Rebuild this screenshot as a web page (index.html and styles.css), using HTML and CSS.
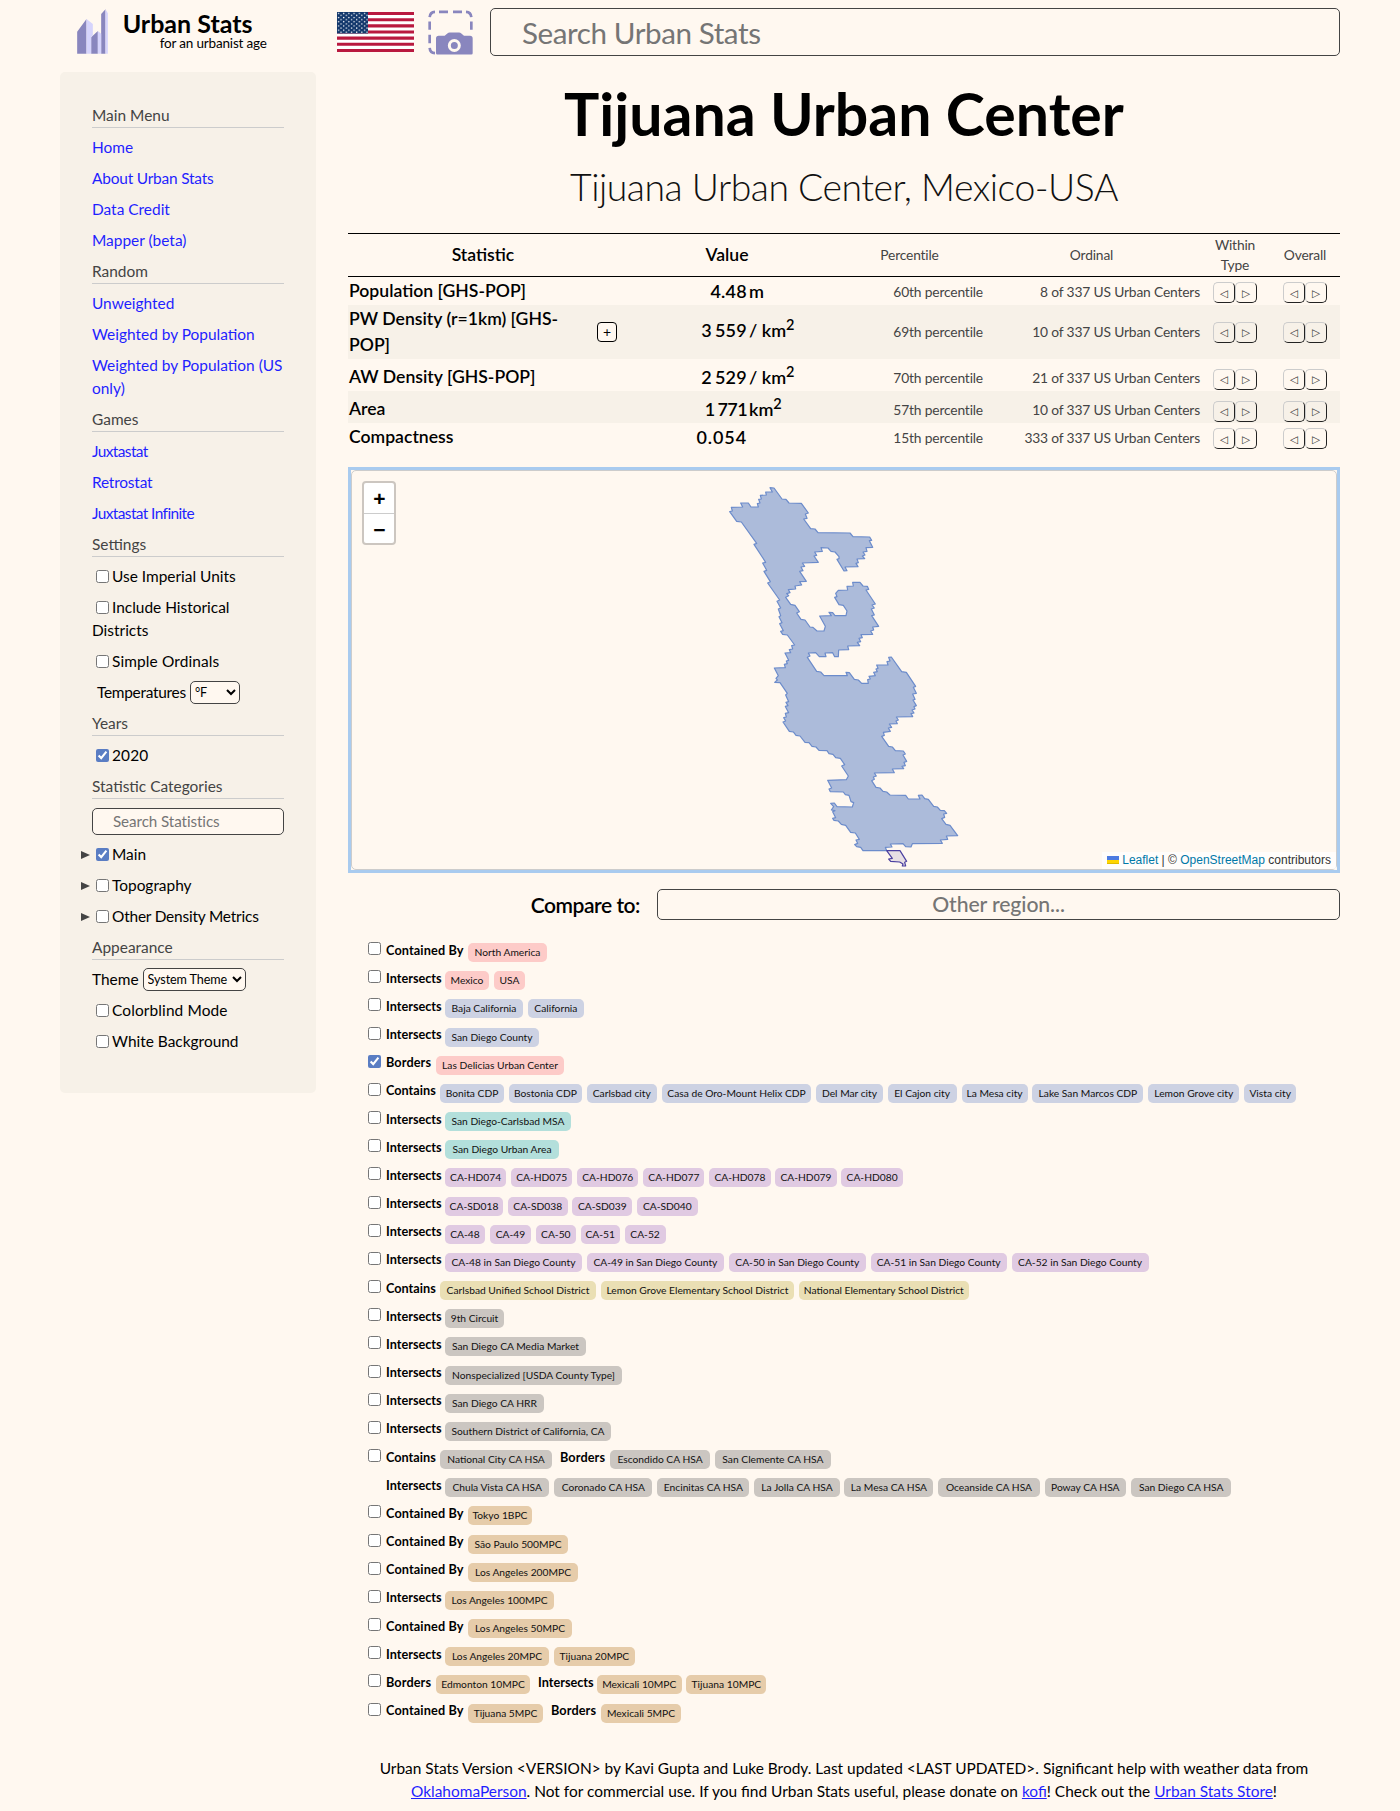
FILE: index.html
```html
<!DOCTYPE html>
<html lang="en">
<head>
<meta charset="utf-8">
<title>Tijuana Urban Center</title>
<link rel="stylesheet" href="styles.css">
</head>
<body>
<header class="top">
  <a class="brand">
    <svg class="logo" viewBox="80 27 92 135"><g fill="#8986be"><path d="M80 95 108 57V161H80zM122 112 142 93V161H122zM152 42 165 28V161H152z"/></g><g fill="#d6d4fc"><path d="M108 57 127 72V106L122 112V161H108zM142 93 152 101V161H142zM165 28 172 40V161H165z"/></g></svg>
    <span class="brand-text"><b>Urban Stats</b><span>for an urbanist age</span></span>
  </a>
  <svg class="flag" viewBox="0 0 77 40">
    <defs><pattern id="stars" width="5.2" height="4.2" patternUnits="userSpaceOnUse"><circle cx="1.5" cy="1.3" r=".72" fill="#fff"/><circle cx="4.1" cy="3.4" r=".72" fill="#fff"/></pattern></defs>
    <rect width="77" height="40" fill="#fff"/>
    <path d="M0 1.54H77M0 7.69H77M0 13.85H77M0 20H77M0 26.15H77M0 32.3H77M0 38.46H77" stroke="#b9193f" stroke-width="3.08"/>
    <rect width="31" height="21.5" fill="#12376b"/><rect width="31" height="21.5" fill="url(#stars)"/>
  </svg>
  <svg class="camera" viewBox="1133 29 135 134">
    <path d="M1138 50Q1139 35 1154 34M1166 34H1193M1208 34H1235M1247 34Q1262 35 1263 50M1138 63V88M1138 103V128M1263 63V88M1138 142Q1139 157 1154 158" fill="none" stroke="#8986be" stroke-width="8"/>
    <path d="M1157 114q0-8 8-8h18l8-7q3-3 7-3h28q4 0 7 3l8 7h18q8 0 8 8v44q0 4-4 4h-102q-4 0-4-4z" fill="#8986be"/>
    <circle cx="1212" cy="135" r="15" fill="#8986be" stroke="#fff8f0" stroke-width="9"/>
  </svg>
  <input class="search" placeholder="Search Urban Stats">
</header>
<div class="page">
  <nav class="side">
    <h4>Main Menu</h4>
    <a>Home</a><a class="snug">About Urban Stats</a><a>Data Credit</a><a>Mapper (beta)</a>
    <h4>Random</h4>
    <a>Unweighted</a><a>Weighted by Population</a><a>Weighted by Population (US<br>only)</a>
    <h4>Games</h4>
    <a class="tight">Juxtastat</a><a class="snug">Retrostat</a><a class="tight">Juxtastat Infinite</a>
    <h4>Settings</h4>
    <label><input type="checkbox">Use Imperial Units</label>
    <label><input type="checkbox">Include Historical<br>Districts</label>
    <label class="loose"><input type="checkbox">Simple Ordinals</label>
    <div class="pick indent snug">Temperatures <select class="temp"><option>°F</option></select></div>
    <h4>Years</h4>
    <label class="loose"><input type="checkbox" checked>2020</label>
    <h4>Statistic Categories</h4>
    <input class="stat-search" placeholder="Search Statistics">
    <label class="tree"><i></i><input type="checkbox" checked>Main</label>
    <label class="tree"><i></i><input type="checkbox">Topography</label>
    <label class="tree snug"><i></i><input type="checkbox">Other Density Metrics</label>
    <h4>Appearance</h4>
    <div class="pick">Theme <select class="theme"><option>System Theme</option></select></div>
    <label class="loose"><input type="checkbox">Colorblind Mode</label>
    <label><input type="checkbox">White Background</label>
  </nav>
  <main class="main">
    <h1>Tijuana Urban Center</h1>
    <h2>Tijuana Urban Center, Mexico-USA</h2>
    <section class="stats">
      <div class="row head"><b>Statistic</b><b class="value-head">Value</b><span>Percentile</span><span>Ordinal</span><span>Within<br>Type</span><span>Overall</span></div>
      <div class="row r1"><b>Population [GHS-POP]</b><b class="num">4.48</b><b class="unit">m</b><span>60th percentile</span><span>8 of 337 US Urban Centers</span><span class="nav"><button>◁</button><button>▷</button></span><span class="nav"><button>◁</button><button>▷</button></span></div>
      <div class="row r2"><b class="with-plus"><span>PW Density (r=1km) [GHS-<br>POP]</span><button class="plus">+</button></b><b class="num">3<i></i>559</b><b class="unit">/ km<sup>2</sup></b><span>69th percentile</span><span>10 of 337 US Urban Centers</span><span class="nav"><button>◁</button><button>▷</button></span><span class="nav"><button>◁</button><button>▷</button></span></div>
      <div class="row r3"><b>AW Density [GHS-POP]</b><b class="num">2<i></i>529</b><b class="unit">/ km<sup>2</sup></b><span>70th percentile</span><span>21 of 337 US Urban Centers</span><span class="nav"><button>◁</button><button>▷</button></span><span class="nav"><button>◁</button><button>▷</button></span></div>
      <div class="row r4"><b>Area</b><b class="num narrow">1<i></i>771</b><b class="unit">km<sup>2</sup></b><span>57th percentile</span><span>10 of 337 US Urban Centers</span><span class="nav"><button>◁</button><button>▷</button></span><span class="nav"><button>◁</button><button>▷</button></span></div>
      <div class="row r5"><b>Compactness</b><b class="num wide">0.054</b><b class="unit"></b><span>15th percentile</span><span>333 of 337 US Urban Centers</span><span class="nav"><button>◁</button><button>▷</button></span><span class="nav"><button>◁</button><button>▷</button></span></div>
    </section>
    <section class="map">
      <svg class="shapes" viewBox="0 0 984 398"><g transform="translate(348 -11) scale(.33333)" stroke-width="3.6" stroke-linejoin="round">
        <path fill="#5a7dc3" fill-opacity=".5" stroke="#6c8ccb" d="M210 83 222 84 246 117 258 118 267 129 304 130 325 159 316 162 321 175 311 177 332 206 345 207 354 218 450 219 459 230 509 231 515 241 508 242 518 262 498 263 501 274 489 276 495 285 487 288 494 296 471 297 475 308 468 310 474 320 435 321 441 332 432 333 411 298 417 296 417 290 405 276 393 274 384 264 363 263 367 274 344 276 350 286 342 288 355 307 307 309 314 319 303 321 309 332 299 334 319 364 299 365 305 375 285 378 287 387 265 389 270 398 260 401 266 407 257 412 272 433 285 436 298 455 290 459 303 478 315 480 330 501 339 502 351 513 372 513 376 499 359 468 394 467 387 457 398 458 405 467 438 467 441 453 430 436 417 434 404 412 411 410 407 400 415 391 443 390 441 379 460 378 458 367 480 367 489 378 502 379 506 388 498 390 526 432 516 435 523 444 514 447 523 465 515 467 536 499 518 501 521 510 512 513 518 523 483 524 487 533 477 535 482 545 472 547 479 557 443 558 446 569 416 570 415 590 404 590 398 578 375 579 378 590 358 590 347 578 325 579 330 588 322 592 350 634 362 636 372 647 442 647 438 637 448 638 463 658 475 660 485 670 505 670 503 659 511 657 507 649 526 647 521 637 532 635 528 627 534 625 530 615 564 615 561 605 570 603 566 592 574 591 605 635 619 637 647 679 640 682 649 700 638 702 645 718 639 720 649 737 642 740 645 747 636 750 642 759 633 761 638 770 589 771 595 780 588 783 592 791 568 792 575 802 565 804 571 814 550 817 553 826 545 829 566 859 577 861 586 872 610 873 616 882 609 885 620 904 612 907 616 917 606 919 611 926 577 927 583 938 523 939 529 948 520 951 523 958 515 962 528 982 540 984 549 994 560 996 570 1005 617 1006 625 1017 660 1017 655 1006 666 1005 674 1016 685 1018 701 1039 712 1041 721 1051 733 1052 740 1060 731 1062 734 1072 725 1076 738 1093 750 1096 773 1127 739 1128 743 1138 721 1140 727 1150 637 1151 633 1161 617 1160 609 1151 571 1152 576 1161 556 1162 560 1172 489 1172 482 1162 470 1160 464 1154 473 1150 468 1140 478 1138 466 1119 452 1117 437 1096 424 1093 415 1083 402 1081 398 1075 407 1073 398 1055 405 1052 394 1050 401 1040 392 1030 403 1029 411 1040 457 1041 461 1028 453 1025 447 1006 436 1004 430 996 391 995 387 987 395 984 383 961 439 959 445 948 425 918 434 914 421 895 407 893 399 883 387 881 381 872 357 871 348 861 336 859 327 848 315 847 300 828 288 826 280 816 268 814 249 786 257 783 251 773 259 771 256 760 266 758 258 743 256 739 264 737 258 727 266 725 257 705 262 700 240 668 224 667 232 660 228 655 235 647 223 624 256 623 253 613 262 611 259 603 266 601 255 579 272 578 268 569 278 567 275 557 284 555 262 525 248 523 242 514 250 512 239 491 246 488 237 470 242 467 235 447 242 444 231 424 239 420 203 369 211 365 192 334 200 331 188 309 197 307 162 253 170 250 124 186 110 184 89 155 97 153 94 142 128 141 122 129 145 129 153 141 175 141 172 131 180 129 176 118 184 117 181 106 199 105 197 96 217 96z"/>
        <path fill="#3a2f96" fill-opacity=".12" stroke="#4a3fa0" d="M560 1172 600 1172 620 1204 614 1207 617 1218 607 1218 609 1212 599 1206 572 1204 566 1197 577 1195z"/>
      </g></svg>
      <div class="zoom"><b>+</b><b>−</b></div>
      <div class="credit"><svg viewBox="0 0 12 8"><path fill="#4c7be1" d="M0 0h12v4H0z"/><path fill="#ffd500" d="M0 4h12v3H0z"/><path fill="#e0bc00" d="M0 7h12v1H0z"/></svg> <a>Leaflet</a> | © <a>OpenStreetMap</a> contributors</div>
    </section>
    <div class="compare"><b>Compare to:</b><input placeholder="Other region..."></div>
    <section class="related" id="related"></section>
    <footer>Urban Stats Version &lt;VERSION&gt; by Kavi Gupta and Luke Brody. Last updated &lt;LAST UPDATED&gt;. Significant help with weather data from<br><a>OklahomaPerson</a>. Not for commercial use. If you find Urban Stats useful, please donate on <a>kofi</a>! Check out the <a>Urban Stats Store</a>!</footer>
  </main>
</div>
<script src="related.js"></script>
</body>
</html>
```
FILE: related.js
```js
// Each row: colour class, then groups of [relation, [name, chip width], ...]
const rows = [
  ['red', ['Contained By', ['North America', 79]]],
  ['red', ['Intersects', ['Mexico', 44], ['USA', 31]]],
  ['blue', ['Intersects', ['Baja California', 78], ['California', 56]]],
  ['blue', ['Intersects', ['San Diego County', 94]]],
  ['red on', ['Borders', ['Las Delicias Urban Center', 128]]],
  ['blue', ['Contains', ['Bonita CDP', 64], ['Bostonia CDP', 73], ['Carlsbad city', 70], ['Casa de Oro-Mount Helix CDP', 149.7], ['Del Mar city', 66.5], ['El Cajon city', 69], ['La Mesa city', 66], ['Lake San Marcos CDP', 111], ['Lemon Grove city', 91], ['Vista city', 52]]],
  ['teal', ['Intersects', ['San Diego-Carlsbad MSA', 126]]],
  ['teal', ['Intersects', ['San Diego Urban Area', 114]]],
  ['purple', ['Intersects', ['CA-HD074', 61.2], ['CA-HD075', 61.2], ['CA-HD076', 61.2], ['CA-HD077', 61.2], ['CA-HD078', 61.2], ['CA-HD079', 61.2], ['CA-HD080', 61.2]]],
  ['purple', ['Intersects', ['CA-SD018', 58], ['CA-SD038', 59.7], ['CA-SD039', 59.7], ['CA-SD040', 60.5]]],
  ['purple', ['Intersects', ['CA-48', 40], ['CA-49', 41], ['CA-50', 40], ['CA-51', 39], ['CA-52', 41]]],
  ['purple', ['Intersects', ['CA-48 in San Diego County', 137], ['CA-49 in San Diego County', 137], ['CA-50 in San Diego County', 137], ['CA-51 in San Diego County', 136], ['CA-52 in San Diego County', 137]]],
  ['yellow', ['Contains', ['Carlsbad Unified School District', 156], ['Lemon Grove Elementary School District', 193], ['National Elementary School District', 170]]],
  ['grey', ['Intersects', ['9th Circuit', 59]]],
  ['grey', ['Intersects', ['San Diego CA Media Market', 141]]],
  ['grey', ['Intersects', ['Nonspecialized [USDA County Type]', 177]]],
  ['grey', ['Intersects', ['San Diego CA HRR', 99]]],
  ['grey', ['Intersects', ['Southern District of California, CA', 166]]],
  ['grey', ['Contains', ['National City CA HSA', 112]], ['Borders', ['Escondido CA HSA', 100], ['San Clemente CA HSA', 116]]],
  ['grey cont', ['Intersects', ['Chula Vista CA HSA', 104.3], ['Coronado CA HSA', 98.2], ['Encinitas CA HSA', 92.2], ['La Jolla CA HSA', 85.2], ['La Mesa CA HSA', 89], ['Oceanside CA HSA', 101.3], ['Poway CA HSA', 81.5], ['San Diego CA HSA', 100.5]]],
  ['tan', ['Contained By', ['Tokyo 1BPC', 64]]],
  ['tan', ['Contained By', ['São Paulo 500MPC', 100]]],
  ['tan', ['Contained By', ['Los Angeles 200MPC', 110]]],
  ['tan', ['Intersects', ['Los Angeles 100MPC', 109]]],
  ['tan', ['Contained By', ['Los Angeles 50MPC', 104]]],
  ['tan', ['Intersects', ['Los Angeles 20MPC', 104], ['Tijuana 20MPC', 81]]],
  ['tan', ['Borders', ['Edmonton 10MPC', 94]], ['Intersects', ['Mexicali 10MPC', 84.5], ['Tijuana 10MPC', 80]]],
  ['tan', ['Contained By', ['Tijuana 5MPC', 75]], ['Borders', ['Mexicali 5MPC', 80]]],
];
document.getElementById('related').innerHTML = rows.map(([cls, ...groups]) => {
  const names = cls.split(' ');
  const box = names.includes('cont') ? '<span class="nobox"></span>'
    : `<input type="checkbox"${names.includes('on') ? ' checked' : ''}>`;
  return `<div class="rel ${cls}">${box}` + groups.map(([kind, ...chips]) =>
    `<div class="group"><b class="kind ${kind.replace(' ', '-').toLowerCase()}">${kind}</b>` +
    chips.map(([t, w]) => `<a class="chip" style="width:${w}px">${t}</a>`).join('') + '</div>').join('') + '</div>';
}).join('');
```
FILE: styles.css
```css
* { box-sizing: border-box; }
body {
  margin: 0; padding: 0 60px; width: 1400px; height: 1811px; overflow: hidden;
  background: #fff8f0; color: #000;
  font: 15.45px/23px Lato, sans-serif;
}
input, select, button { font-family: inherit; color: inherit; margin: 0; }
b, h1, h2, h4 { font-weight: 500; margin: 0; }
input[type=checkbox] { width: 13px; height: 13px; accent-color: #5a7dc3; }

.top { display: flex; height: 72px; align-items: flex-start; }
.brand { display: flex; width: 277px; padding: 9px 0 0 16.7px; }
.logo { width: 31px; height: 45px; }
.brand-text { display: flex; flex-direction: column; width: 190px; padding-left: 15px; }
.brand-text b { font-size: 25px; line-height: 28px; font-weight: 700; white-space: nowrap; }
.brand-text span { font-size: 13.5px; line-height: 16px; letter-spacing: -.17px; padding-left: 37px; margin-top: -2px; white-space: nowrap; }
.flag { width: 77px; height: 40px; margin-top: 12px; }
.camera { width: 45px; height: 45px; margin: 9.5px 17.5px 0 13.5px; }
.search, .stat-search, .compare input { border: 1px solid #444; border-radius: 5px; background: #fff8f0; }
::placeholder { color: #757575; opacity: 1; }
.search { flex: 1; height: 48px; margin-top: 8px; padding: 0 30px 0 31px; font-size: 29.6px; letter-spacing: -.42px; }

.page { display: flex; gap: 32px; align-items: flex-start; }
.side { width: 256px; height: 1021px; padding: 32px; background: #f7f1e8; border-radius: 5px; display: flex; flex-direction: column; gap: 8px; white-space: nowrap; }
.side h4 { height: 24px; font-size: inherit; font-weight: 400; color: #444; border-bottom: 1px solid #ccc; }
.side a { color: #1f1fff; }
.side .snug { letter-spacing: -.2px; }
.side .tight { letter-spacing: -.6px; }
.side .loose { letter-spacing: .12px; }
.side label input { margin: 0 3px 0 4px; vertical-align: -1px; }
.tree { display: flex; align-items: center; margin-left: -11px; }
.tree i { border-left: 9px solid #444; border-top: 4.5px solid transparent; border-bottom: 4.5px solid transparent; margin-top: 1px; }
.side .tree input { margin-left: 6px; }
.pick { display: flex; gap: 5px; height: 23px; }
.indent { padding-left: 5px; }
.pick.indent { gap: 4px; letter-spacing: -.28px; }
select { height: 23px; border: 1px solid #444; border-radius: 5px; background: #fff8f0; font-size: 12.6px; }
.temp { width: 50px; }
.theme { width: 103px; }
.theme { margin-left: -1px; letter-spacing: -.1px; }
.stat-search { height: 27px; margin-top: 1px; padding: 0 20px 2px; font-size: 15.2px; letter-spacing: -.08px; }

.main { width: 992px; }
h1 { height: 88px; line-height: 84px; font-size: 59px; font-weight: 700; text-align: center; white-space: nowrap; }
h2 { height: 73px; line-height: 54px; font-size: 37.4px; font-weight: 300; color: #111; text-align: center; white-space: nowrap; letter-spacing: -.5px; }
.row { display: grid; grid-template-columns: 270px 129px 89px 147px 217px 70px 70px; align-items: center; white-space: nowrap; }
.row > b { font-size: 17.6px; line-height: 26px; font-weight: 600; padding-left: 1px; }
.row > span { font-size: 13.8px; line-height: 20px; letter-spacing: -.16px; color: #444; text-align: right; padding: 2px 0 0 0; }
.row .num { text-align: right; padding: 0; font-size: 18px; letter-spacing: .25px; }
.row .wide { letter-spacing: .9px; }
.row .narrow { letter-spacing: -.6px; }
.num i { display: inline-block; width: 3px; }
.row .unit { padding-left: 2px; font-size: 18px; }
.unit sup { font-size: 14.5px; line-height: 0; }
.head { height: 44px; border-top: 1px solid #000; border-bottom: 1px solid #000; }
.head > b, .head > span, .row > .nav { text-align: center; padding: 0; }
.value-head { grid-column: span 2; }
.r1 { height: 28px; } .r2 { height: 54px; } .r3, .r4 { height: 32px; } .r5 { height: 28px; }
.r2, .r4 { background: #f7f1e8; }
.r3 > *, .r4 > * { padding-top: 4px; }
.row.r3 > *, .row.r4 > * { padding-top: 4px; }
.row.r3 > span, .row.r4 > span { padding-top: 5px; }
.r2 > .num, .r2 > .unit { margin-top: -4px; }
.r2 > span { margin-top: -3px; }
.with-plus { display: flex; justify-content: space-between; align-items: center; }
.plus { width: 20px; height: 20px; border: 1px solid #000; border-radius: 4px; background: #fff8f0; padding: 0; font-size: 14px; line-height: 16px; margin-right: 1px; }
.nav { display: flex; justify-content: center; }
.nav button { width: 22px; height: 21px; margin-top: 3px; padding: 0; background: transparent; border: 1px solid; border-color: #ccc #222 #222 #ccc; border-radius: 5px; color: #333; font: 10.5px/18px "DejaVu Sans", sans-serif; }

.map { position: relative; height: 406px; margin-top: 16px; border: 3px solid #a9cbef; background: #fff8f0; }
.shapes { display: block; width: 986px; height: 400px; border: 1px solid #ccc; border-radius: 5px; }
.zoom { position: absolute; left: 11px; top: 11px; width: 34px; height: 64px; border: 2px solid #ccc6c0; border-radius: 4px; background: #fff; text-align: center; }
.zoom b { display: block; height: 30px; padding-left: 1px; font: bold 21px/32px "Liberation Sans", sans-serif; }
.zoom b + b { border-top: 1px solid #ccc; }
.credit { position: absolute; right: 1px; bottom: 1px; height: 17px; padding: 0 5px; background: rgba(255,255,255,.75); font: 12px/17px "Liberation Sans", sans-serif; color: #333; white-space: nowrap; }
.credit svg { width: 12px; height: 8px; }
.credit a { color: #0078a8; }

.compare { display: flex; justify-content: flex-end; align-items: center; margin-top: 16px; gap: 17px; }
.compare b { font-size: 21px; font-weight: 600; letter-spacing: -.45px; }
.compare input { width: 683px; height: 31px; text-align: center; font-size: 21.2px; letter-spacing: -.1px; font-weight: 500; padding-bottom: 3px; }

.related { margin: 18px 0 0 20px; }
.rel { display: flex; height: 28.18px; padding-top: 4px; }
.rel > input, .nobox { width: 13px; height: 13px; margin-right: 5px; }
.group { display: flex; gap: 4.9px; }
.group + .group { margin-left: 8px; }
.kind { font-size: 12.7px; line-height: 16px; font-weight: 700; margin: -.5px -4.9px 0 0; white-space: nowrap; }
.contained-by { width: 82px; letter-spacing: .12px; } .intersects { width: 59px; } .borders { width: 50px; letter-spacing: .1px; } .contains { width: 54px; }
.chip { height: 19px; margin-top: 1px; border-radius: 5px; font-size: 10.25px; line-height: 19px; text-align: center; white-space: nowrap; color: #111; }
.red .chip { background: #fdcbc8; } .blue .chip { background: #cdd2e3; } .teal .chip { background: #b3dfdb; }
.purple .chip { background: #e0cae2; } .yellow .chip { background: #eadfb4; } .grey .chip { background: #cbc6c1; } .tan .chip { background: #e6ccaa; }

footer { margin-top: 30px; text-align: center; white-space: nowrap; }
footer a { color: #1f1fff; text-decoration: underline; }
```
